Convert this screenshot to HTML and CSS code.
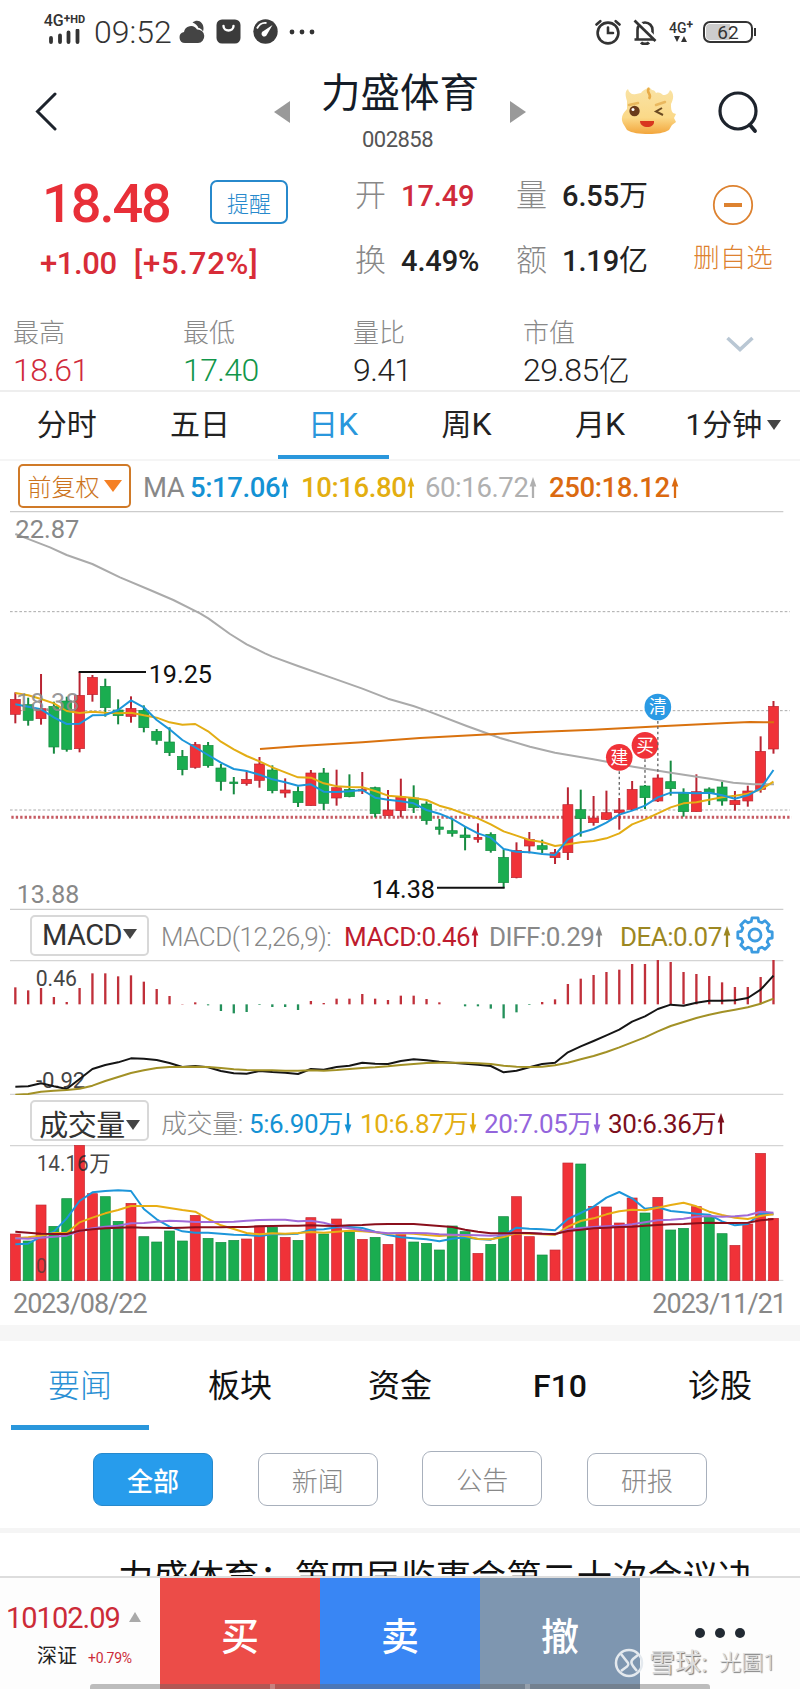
FILE: index.html
```html
<!DOCTYPE html>
<html lang="zh-CN">
<head>
    <meta charset="UTF-8">
    <meta name="viewport" content="width=device-width, initial-scale=1.0">
    <title>力盛体育 002858</title>
    <link rel="stylesheet" href="styles.css">
</head>
<body>
    <div class="phone">
        <!-- 状态栏 -->
        <div class="status-bar">
            <div class="signal">
                <span class="net">4G<sup>+</sup><b>HD</b></span>
                <svg width="34" height="15" viewBox="0 0 34 15"><path d="M3 9v4M12 6.500v6.500M20.500 3.500v9.500M29.500 1.500v11.500" stroke="#333" stroke-width="3.800" stroke-linecap="round"/></svg>
            </div>
            <span class="time">09:52</span>
            <svg class="st-cloud" width="26" height="26" viewBox="0 0 26 26"><path d="M6 24a5.500 5.500 0 0 1-1-10.900A7 7 0 0 1 18 10.500a6 6 0 0 1 1 13.500z" fill="#444"/><path d="M13.500 3.500c6-5 13 1 10.500 9-1.500-3-4-3.500-4.500-3.500-1-2.500-3-4.500-6-5.500z" fill="#444"/></svg>
            <svg class="st-bag" width="25" height="25" viewBox="0 0 25 25"><rect x=".5" y=".5" width="24" height="24" rx="5.500" fill="#3b3b3b"/><path d="M7.500 7c0 6 10 6 10 0" fill="none" stroke="#fff" stroke-width="2.400" stroke-linecap="round"/></svg>
            <svg class="st-gauge" width="25" height="25" viewBox="0 0 25 25"><circle cx="12.500" cy="12.500" r="12.200" fill="#3b3b3b"/><path d="M19.500 6l-5.500 9.500a2.800 2.800 0 1 1-3.500-3.500z" fill="#fff"/><path d="M4 9.500c2-4 6-6 9.500-5.500" fill="none" stroke="#fff" stroke-width="1.800"/></svg>
            <svg class="st-dots" width="26" height="6" viewBox="0 0 26 6"><g fill="#333"><circle cx="3" cy="3" r="2.400"/><circle cx="13" cy="3" r="2.400"/><circle cx="23" cy="3" r="2.400"/></g></svg>
            <div class="status-right">
                <svg width="26" height="26" viewBox="0 0 26 26" fill="none" stroke="#333" stroke-width="2.600" stroke-linecap="round"><circle cx="13" cy="14" r="10.400"/><path d="M13 8.500V14h5M1.500 5.500l3.800-3.300M24.500 5.500l-3.800-3.300"/></svg>
                <svg width="24" height="26" viewBox="0 0 24 26" fill="none" stroke="#333" stroke-width="2.600"><path d="M4.500 20.500V11c0-4 3-7.500 7.500-7.500s7.500 3.500 7.500 7.500v9.500M1.500 20.500h21"/><path d="M8 23.500c2 2 6 2 8 0" stroke-width="3"/><path d="M4 1.500l20 20" stroke="#fff" stroke-width="4"/><path d="M1.500 1.500l21 20.500" stroke-width="2.700"/></svg>
                <div class="net2">
                    <span>4G<sup>+</sup></span>
                    <svg width="13" height="6" viewBox="0 0 13 6"><path d="M0 0h6L3 6zM7 6h6l-3-6z" fill="#333"/></svg>
                </div>
                <div class="battery"><span>62</span></div>
            </div>
        </div>

        <!-- 标题栏 -->
        <header class="header">
            <svg class="back" width="22" height="42" viewBox="0 0 22 42"><path d="M20 3L2.500 20.500 20 38" fill="none" stroke="#1d232c" stroke-width="3" stroke-linecap="round"/></svg>
            <i class="arrow-left"></i>
            <div class="title">
                <h1>力盛体育</h1>
                <p>002858</p>
            </div>
            <i class="arrow-right"></i>
            <svg class="mascot" width="56" height="50" viewBox="0 0 56 50">
                <defs>
                    <linearGradient id="face" x1="0" y1="0" x2="0" y2="1">
                        <stop offset="0" stop-color="#f9e3a6"/>
                        <stop offset=".65" stop-color="#fbd988"/>
                        <stop offset="1" stop-color="#f3a63c"/>
                    </linearGradient>
                </defs>
                <path d="M6 15C4 9 4 5 7 3c1 4 4 6 8 5 2 0 3-1 5-1 1-2 3-3 5-4l3-2 3 3c2 0 3 1 4 3 3-1 5 0 7 2 4 0 6-2 7-5 4 3 4 8 1 14 0 4 0 7 2 9l3 1-2 4 2 4-4 3-3 5c-5 3-12 4-20 4-10 0-17-1-22-4l-3-5c-4-6-2-11 3-16z" fill="url(#face)"/>
                <path d="M28 2c-4 5 4 6 0 11" stroke="#e8ab48" stroke-width="2.500" fill="none"/>
                <path d="M8 19l9-2M35 19l9-3" stroke="#e9b85e" stroke-width="2.500" stroke-linecap="round"/>
                <circle cx="13.500" cy="25" r="5.200" fill="#6a3b1c"/><circle cx="12" cy="23.500" r="1.500" fill="#fff"/>
                <path d="M41 22l-6 3.500 7 3.500" fill="none" stroke="#6a4a22" stroke-width="2"/>
                <path d="M19 35h14c1 8-14 8-14 0z" fill="#d8371f"/>
            </svg>
            <svg class="search" width="42" height="44" viewBox="0 0 42 44" fill="none" stroke="#1d232c"><circle cx="20" cy="21" r="18" stroke-width="3.200"/><path d="M32 35l5 6" stroke-width="3.800" stroke-linecap="round"/></svg>
        </header>

        <!-- 行情报价 -->
        <section class="quote">
            <div class="price-box">
                <div class="price-row">
                    <span class="price">18.48</span>
                    <button class="remind">提醒</button>
                </div>
                <div class="change"><span>+1.00</span><span class="pct">[+5.72%]</span></div>
            </div>
            <div class="quote-grid">
                <label>开</label><b class="up">17.49</b><label>量</label><b>6.55<em>万</em></b>
                <label>换</label><b>4.49%</b><label>额</label><b>1.19<em>亿</em></b>
            </div>
            <div class="fav">
                <svg width="42" height="42" viewBox="0 0 42 42"><circle cx="21" cy="21" r="19.200" fill="none" stroke="#dd8230" stroke-width="1.800"/><path d="M12 21h18" stroke="#dd8230" stroke-width="4"/></svg>
                <span>删自选</span>
            </div>
        </section>

        <section class="stats">
            <div><label>最高</label><p class="up">18.61</p></div>
            <div><label>最低</label><p class="down">17.40</p></div>
            <div><label>量比</label><p>9.41</p></div>
            <div><label>市值</label><p>29.85<em>亿</em></p></div>
            <svg class="more" width="30" height="18" viewBox="0 0 30 18"><path d="M2.500 3L15 14.500 27.500 3" fill="none" stroke="#b9c7d4" stroke-width="3.600"/></svg>
        </section>

        <nav class="periods">
            <a>分时</a>
            <a>五日</a>
            <a class="active">日<b>K</b></a>
            <a>周<b>K</b></a>
            <a>月<b>K</b></a>
            <a class="minute">1分钟<i class="caret"></i></a>
        </nav>

        <!-- K线图 -->
        <div class="ind-row ma-row">
            <button class="fq">前复权<i class="caret"></i></button>
            <span class="c-gray">MA</span>
            <span class="c-blue bold">5:17.06<svg class="arr"><use href="#up"/></svg></span>
            <span class="c-yellow bold">10:16.80<svg class="arr"><use href="#up"/></svg></span>
            <span class="c-light">60:16.72<svg class="arr"><use href="#up"/></svg></span>
            <span class="c-orange bold">250:18.12<svg class="arr"><use href="#up"/></svg></span>
        </div>
        <svg class="chart" id="kline" width="800" height="400" viewBox="0 0 2400 1200"></svg>

        <!-- MACD -->
        <div class="ind-row macd-row">
            <button class="ind-btn">MACD<i class="caret"></i></button>
            <span class="c-gray light">MACD(12,26,9):</span>
            <span class="c-red">MACD:0.46<svg class="arr"><use href="#up"/></svg></span>
            <span class="c-gray">DIFF:0.29<svg class="arr"><use href="#up"/></svg></span>
            <span class="c-olive">DEA:0.07<svg class="arr"><use href="#up"/></svg></span>
            <svg class="gear" width="40" height="40" viewBox="-20 -20 40 40" fill="none" stroke="#3b9be0" stroke-width="2.800" stroke-linejoin="round"><path id="gearPath"/><circle r="6"/></svg>
        </div>
        <svg class="chart" id="macd" width="800" height="135" viewBox="0 165 2400 405"></svg>

        <!-- 成交量 -->
        <div class="ind-row vol-row">
            <button class="ind-btn cn">成交量<i class="caret"></i></button>
            <span class="c-gray light">成交量:</span>
            <span class="c-blue">5:6.90<em>万</em><svg class="arr"><use href="#down"/></svg></span>
            <span class="c-yellow">10:6.87<em>万</em><svg class="arr"><use href="#down"/></svg></span>
            <span class="c-purple">20:7.05<em>万</em><svg class="arr"><use href="#down"/></svg></span>
            <span class="c-dark">30:6.36<em>万</em><svg class="arr"><use href="#up"/></svg></span>
        </div>
        <svg class="chart" id="volume" width="800" height="136" viewBox="0 720 2400 408"></svg>
        <div class="dates"><span>2023/08/22</span><span>2023/11/21</span></div>

        <!-- 资讯 -->
        <nav class="news-tabs">
            <a class="active">要闻</a>
            <a>板块</a>
            <a>资金</a>
            <a><b>F10</b></a>
            <a>诊股</a>
        </nav>
        <div class="chips">
            <button class="on">全部</button>
            <button>新闻</button>
            <button class="tall">公告</button>
            <button>研报</button>
        </div>
        <div class="news"><p>力盛体育：第四届监事会第二十次会议决</p></div>

        <!-- 底部交易栏 -->
        <footer class="trade-bar">
            <div class="index">
                <div class="index-val">10102.09<i></i></div>
                <div class="index-name">深证<small>+0.79%</small></div>
            </div>
            <button class="buy">买</button>
            <button class="sell">卖</button>
            <button class="cancel">撤</button>
            <div class="dots"><i></i><i></i><i></i></div>
            <div class="home-bar"><i></i><i></i></div>
            <div class="watermark">
                <svg width="30" height="30" viewBox="0 0 30 30" fill="none" stroke="#e4e9ee" stroke-width="2.500"><circle cx="15" cy="15" r="13"/><path d="M7 6l7 9c1 2 0 3-3 5l-4 3M24 7l-5 4c-3 3-2 5 4 12"/></svg>
                <span>雪球:</span><span class="user">光圖1</span>
            </div>
        </footer>
    </div>

    <svg width="0" height="0" class="defs">
        <symbol id="up" viewBox="0 0 8 22"><path d="M4 8v14" stroke="currentColor" stroke-width="2.400"/><path d="M0.500 10L4 0l3.500 10z" fill="currentColor"/></symbol>
        <symbol id="down" viewBox="0 0 8 22"><path d="M4 0v14" stroke="currentColor" stroke-width="2.400"/><path d="M0.500 12L4 22l3.500-10z" fill="currentColor"/></symbol>
    </svg>
    <script src="script.js"></script>
</body>
</html>
```
FILE: styles.css
```css
* {
    box-sizing: border-box;
    margin: 0;
    padding: 0;
}
body {
    width: 800px;
    background: #fff;
    font-family: Roboto, "Noto Sans CJK SC", sans-serif;
    color: #222;
}
button {
    font-family: inherit;
    background: #fff;
}
em, i {
    font-style: normal;
}
.phone {
    width: 800px;
    height: 1689px;
    overflow: hidden;
    display: flex;
    flex-direction: column;
}
.phone > * {
    flex-shrink: 0;
}
.defs {
    display: block;
}
.up {
    color: #d02a3a;
}
.down {
    color: #12964a;
}
.caret {
    display: inline-block;
    border: 7px solid transparent;
    border-top: 10px solid #444;
    border-bottom: 0;
}

/* 状态栏 */
.status-bar {
    height: 60px;
    padding: 3px 47px 0 43px;
    display: flex;
    align-items: center;
    color: #333;
}
.signal {
    width: 43px;
    display: flex;
    flex-direction: column;
    align-items: center;
    gap: 2px;
    padding-bottom: 4px;
}
.net {
    font-size: 16px;
    font-weight: 500;
    line-height: 12px;
    white-space: nowrap;
    display: flex;
}
.net sup, .net2 sup {
    font-size: 12px;
    line-height: 8px;
    font-weight: 700;
}
.net b {
    font-size: 11px;
    line-height: 9px;
}
.time {
    width: 92px;
    margin-left: 8px;
    font-size: 32px;
    font-weight: 300;
    letter-spacing: 0;
    line-height: 36px;
    margin-right: -7px;
}
.st-bag {
    margin-left: 11px;
}
.st-gauge {
    margin-left: 12px;
}
.st-dots {
    margin-left: 11px;
}
.status-right {
    margin-left: auto;
    display: flex;
    align-items: center;
}
.status-right > * {
    margin-left: 12px;
}
.net2 {
    display: flex;
    flex-direction: column;
    align-items: center;
    font-size: 14px;
    font-weight: 500;
    line-height: 15px;
}
.net2 span {
    display: flex;
}
.battery {
    position: relative;
    width: 50px;
    height: 22px;
    margin-left: 10px;
    border: 2px solid #333;
    border-radius: 7px;
    background: linear-gradient(90deg, #ccc 55%, #fff 55%);
    box-shadow: inset 0 0 0 1px #fff;
    text-align: center;
    font-size: 19px;
    line-height: 19px;
}
.battery::after {
    content: "";
    position: absolute;
    right: -5px;
    top: 5px;
    width: 2px;
    height: 8px;
    background: #333;
}

/* 标题栏 */
.header {
    height: 105px;
    display: flex;
    align-items: flex-start;
}
.back {
    margin: 31px 0 0 35px;
}
.arrow-left, .arrow-right {
    border: 11px solid transparent;
    margin-top: 41px;
}
.arrow-left {
    margin-left: 217px;
    border-left: 0;
    border-right: 16px solid #999;
}
.arrow-right {
    border-right: 0;
    border-left: 16px solid #999;
}
.title {
    width: 220px;
    padding-top: 9px;
    text-align: center;
}
.title h1 {
    font-size: 39.5px;
    font-weight: 400;
    line-height: 50px;
    color: #141c28;
}
.title p {
    margin: 9px 5px 0 0;
    font-size: 22px;
    line-height: 24px;
    letter-spacing: -0.5px;
    color: #555;
}
.mascot {
    margin: 26px 0 0 95px;
}
.search {
    margin: 30px 0 0 41px;
}

/* 报价 */
.quote {
    height: 135px;
    display: flex;
}
.price-box {
    width: 355px;
    padding-left: 40px;
}
.price-row {
    display: flex;
    height: 74px;
}
.price {
    width: 170px;
    padding-left: 2px;
    font-size: 54px;
    font-weight: 500;
    line-height: 78px;
    letter-spacing: -2px;
    color: #e82f38;
}
.remind {
    width: 78px;
    height: 44px;
    margin-top: 15px;
    border: 2px solid #2789cc;
    border-radius: 7px;
    color: #2789cc;
    font-size: 22px;
    font-weight: 300;
}
.change {
    display: flex;
    gap: 17px;
    font-size: 31px;
    line-height: 50px;
    letter-spacing: -0.4px;
    color: #d82c38;
    font-weight: 500;
}
.change .pct {
    letter-spacing: 0.8px;
}
.quote-grid {
    width: 325px;
    height: 130px;
    padding-top: 0;
    display: grid;
    grid-template-columns: 46px 115px 46px 1fr;
    grid-template-rows: 62px 68px;
    align-items: center;
    font-size: 29px;
}
.quote-grid label {
    font-size: 31px;
    line-height: 40px;
    font-weight: 300;
    color: #888;
}
.quote-grid b {
    font-weight: 500;
    line-height: 40px;
    white-space: nowrap;
    letter-spacing: -0.1px;
}
.quote-grid em {
    font-weight: 400;
}
.fav {
    width: 106px;
    padding-top: 19px;
    display: flex;
    flex-direction: column;
    align-items: center;
    color: #dd8230;
    font-size: 26.5px;
    font-weight: 300;
    line-height: 38px;
}
.fav span {
    margin-top: 13px;
}
.stats {
    height: 92px;
    padding: 15px 0 0 13px;
    display: grid;
    grid-template-columns: repeat(4, 170px) 1fr;
    border-bottom: 2px solid #eee;
}
.stats label {
    display: block;
    font-size: 26px;
    font-weight: 300;
    line-height: 37px;
    color: #888;
}
.stats p {
    font-size: 32px;
    font-weight: 300;
    line-height: 37px;
    letter-spacing: -0.6px;
    white-space: nowrap;
}
.stats em {
    font-size: 31px;
}
.more {
    margin: 20px 0 0 32px;
}

/* 周期 */
.periods {
    height: 69px;
    display: grid;
    grid-template-columns: repeat(6, 1fr);
    border-bottom: 2px solid #f5f5f5;
    font-size: 30px;
    line-height: 65px;
    text-align: center;
}
.periods b {
    font-weight: 400;
    font-size: 32px;
}
.periods .active {
    width: 111px;
    height: 67px;
    margin-left: 11px;
    border-bottom: 4px solid #2a97dc;
    color: #2a97dc;
}
.minute .caret {
    margin-left: 5px;
    vertical-align: 5px;
}

/* 指标行 */
.ind-row {
    display: grid;
    align-items: center;
    height: 50px;
    font-size: 26px;
    white-space: nowrap;
}
.ind-row span {
    padding-top: 3px;
}
.ind-row .light {
    font-weight: 300;
}
.ind-row .bold {
    font-weight: 500;
}
.ind-row em {
    font-size: 25px;
    font-weight: 400;
}
.arr {
    width: 8px;
    height: 21px;
    vertical-align: -1px;
    margin-left: 1px;
}
.ma-row {
    height: 49px;
    padding-left: 18px;
    grid-template-columns: 125px 47px 111px 124px 124px 1fr;
    font-size: 27.5px;
    letter-spacing: -0.4px;
}
.fq {
    width: 113px;
    height: 44px;
    border: 2px solid #d07a28;
    border-radius: 5px;
    color: #cc7420;
    font-size: 24px;
    font-weight: 300;
}
.fq .caret {
    border-width: 12px 9px 0;
    border-top-color: #f58024;
    margin-left: 4px;
    vertical-align: 4px;
}
.ind-btn {
    width: 119px;
    height: 41px;
    border: 2px solid #d8d8d8;
    border-radius: 5px;
    font-size: 29px;
    color: #333;
    letter-spacing: -0.5px;
}
.ind-btn.cn {
    font-size: 29px;
}
.ind-btn .caret {
    margin-left: 1px;
    vertical-align: 6px;
}
.macd-row {
    padding-left: 30px;
    grid-template-columns: 131px 183px 145px 131px 114px 1fr;
    letter-spacing: -0.5px;
}
.gear {
    margin-left: 1px;
}
.vol-row {
    padding-left: 30px;
    grid-template-columns: 131px 88px 111px 124px 124px 1fr;
    letter-spacing: -0.4px;
}
.c-gray { color: #888; }
.c-light { color: #b0b0b0; }
.c-blue { color: #1492d4; }
.c-yellow { color: #e3ae10; }
.c-orange { color: #db6a10; }
.c-red { color: #be1c2e; }
.c-olive { color: #9c8722; }
.c-purple { color: #9365dc; }
.c-dark { color: #7c0f1c; }

.chart {
    display: block;
    font-family: Roboto, "Noto Sans CJK SC", sans-serif;
}
.dates {
    height: 44px;
    padding: 0 14px 0 13px;
    display: flex;
    justify-content: space-between;
    font-size: 27px;
    line-height: 46px;
    letter-spacing: -1px;
    color: #888;
}

/* 资讯 */
.news-tabs {
    height: 106px;
    border-top: 16px solid #f6f6f6;
    display: grid;
    grid-template-columns: repeat(5, 160px);
    text-align: center;
    font-size: 32px;
    line-height: 91px;
    color: #111;
}
.news-tabs b {
    font-weight: 500;
}
.news-tabs .active {
    width: 138px;
    height: 89px;
    margin-left: 11px;
    border-bottom: 5px solid #2a97dc;
    color: #2a90d4;
    font-weight: 300;
}
.chips {
    height: 102px;
    padding: 22px 93px 0;
    display: flex;
    justify-content: space-between;
    border-bottom: 5px solid #f5f5f5;
}
.chips button {
    width: 120px;
    height: 53px;
    border: 1px solid #a8b0bc;
    border-radius: 9px;
    font-size: 26px;
    font-weight: 300;
    color: #888;
}
.chips .on {
    background: #279cec;
    border-color: #2789cc;
    color: #fff;
    font-weight: 500;
}
.chips .tall {
    height: 55px;
    margin-top: -2px;
}
.news {
    height: 43px;
    overflow: hidden;
    padding: 20px 0 0 118px;
}
.news p {
    font-size: 35.3px;
    line-height: 51px;
    white-space: nowrap;
    color: #111;
}

/* 交易栏 */
.trade-bar {
    position: relative;
    height: 113px;
    display: grid;
    grid-template-columns: repeat(5, 160px);
    border-top: 2px solid #ddd;
    background: #fdfdfd;
}
.trade-bar button {
    border: 0;
    color: #fff;
    font-size: 38px;
    font-weight: 500;
}
.trade-bar .buy { background: #ec4c48; }
.trade-bar .sell { background: #3986f4; }
.trade-bar .cancel { background: #7e96b0; }
.index {
    padding: 20px 0 0 6px;
}
.index-val {
    font-size: 29px;
    line-height: 40px;
    letter-spacing: -1px;
    color: #cc2b38;
    white-space: nowrap;
}
.index-val i {
    display: inline-block;
    margin-left: 9px;
    border: 6px solid transparent;
    border-top: 0;
    border-bottom: 10px solid #aaa;
    vertical-align: 6px;
}
.index-name {
    padding-left: 31px;
    font-size: 20px;
    line-height: 36px;
}
.index-name small {
    margin-left: 11px;
    font-size: 14px;
    letter-spacing: -0.3px;
    color: #cc2b38;
}
.dots {
    display: flex;
    justify-content: center;
    gap: 10px;
    padding-top: 50px;
}
.dots i {
    width: 10px;
    height: 10px;
    border-radius: 50%;
    background: #222a33;
}
.home-bar {
    position: absolute;
    left: 90px;
    right: 90px;
    bottom: 0;
    height: 5px;
    padding: 0 180px;
    border-radius: 3px 3px 0 0;
    background: rgba(100, 100, 100, 0.42);
    display: flex;
    justify-content: space-between;
}
.home-bar i {
    width: 5px;
    background: rgba(255, 255, 255, 0.25);
}
.watermark {
    position: absolute;
    left: 614px;
    top: 69px;
    display: flex;
    align-items: center;
    font-size: 26px;
    line-height: 32px;
    color: #ddd;
    text-shadow: 1px 1px 1px #777;
    white-space: nowrap;
}
.watermark svg {
    margin-right: 5px;
}
.watermark .user {
    font-size: 22px;
    margin-left: 12px;
    font-weight: 300;
}
```
FILE: script.js
```js
const RED = '#f03238', GREEN = '#1aad50';
const STEP = 38.55, START = 46;
const xAt = i => START + i * STEP;

// 最高, 实体上沿, 实体下沿, 最低, 涨(1)/跌(0)
const candles = [
    [547,568,613,640,1],[563,584,631,647,0],[492,596,626,644,1],[575,589,711,731,0],[560,573,718,725,0],
    [486,556,716,727,1],[495,502,554,575,1],[506,529,593,620,0],[568,600,617,643,0],[559,595,619,638,1],
    [586,601,653,667,0],[657,664,691,704,0],[652,696,728,738,0],[720,739,779,796,0],[696,704,772,776,1],
    [696,706,767,773,0],[762,774,814,842,0],[801,816,821,853,0],[785,808,821,827,1],[741,762,811,833,1],
    [766,780,842,850,0],[805,840,849,863,1],[829,844,878,891,0],[780,789,887,887,1],[774,789,880,900,0],
    [779,833,864,887,1],[793,838,860,862,0],[786,838,843,852,1],[830,833,911,922,0],[840,900,917,917,1],
    [806,861,902,922,1],[826,864,893,909,0],[874,882,932,944,0],[927,951,958,974,0],[925,962,970,980,0],
    [950,975,983,1021,0],[940,982,988,998,1],[967,973,1022,1028,0],[1018,1042,1118,1133,0],[997,1021,1103,1105,1],
    [966,988,1008,1030,1],[989,1007,1018,1030,0],[1017,1028,1043,1062,1],[832,884,1028,1050,1],[839,899,926,980,0],
    [858,924,938,947,1],[842,908,928,930,1],[864,900,908,959,1],[813,838,898,900,1],[825,828,863,897,0],
    [793,804,873,876,1],[752,815,836,857,0],[835,850,905,920,0],[793,845,905,905,1],[832,837,850,885,0],
    [815,831,873,887,0],[843,871,884,902,1],[827,843,873,890,1],[679,724,838,848,1],[573,589,717,731,1]
];
const ma5 = [583,590,598,622,642,641,616,615,600,571,592,630,658,690,712,735,758,777,783,794,808,817,827,823,845,846,844,840,863,869,874,880,900,911,927,950,970,983,1017,1025,1027,1032,1035,988,968,957,938,914,902,887,862,848,848,850,848,856,866,856,835,780];
const ma10 = [549,556,567,580,603,609,605,608,610,608,616,623,637,644,642,664,695,718,738,754,772,787,802,803,820,829,831,832,843,857,860,864,870,887,898,912,925,943,964,977,990,996,1008,1003,997,993,985,970,943,928,910,892,880,877,869,862,857,851,839,815];
const ma60 = '46,72 80,85 150,112 200,135 277,162 360,202 450,240 520,270 600,310 625,325 690,372 740,403 795,430 817,440 894,468 1000,505 1087,536 1164,566 1240,588 1280,602 1400,648 1500,684 1590,710 1665,728 1780,748 1900,770 2012,788 2130,806 2200,818 2260,823 2322,823';
const ma250 = '780,717 900,708 1087,697 1260,684 1500,671 1590,667 1780,659 1980,649 2180,639 2250,636 2322,637';

const macdBars = [247,256,249,276,291,249,205,205,214,211,230,252,273,297,292,301,318,325,321,300,306,306,315,288,294,281,281,267,281,285,272,272,282,292,298,304,304,311,340,322,300,291,283,237,221,210,201,194,177,177,164,171,201,207,213,232,246,246,216,165];
const diff = [545,544,535,544,552,522,492,480,472,460,461,465,474,486,483,487,498,505,506,498,501,503,507,492,494,486,482,473,476,477,468,463,466,470,473,476,479,483,502,497,487,477,473,442,424,408,391,374,350,334,312,299,302,293,287,287,286,279,254,212];
const dea = [569,567,560,557,555,551,542,528,516,504,496,489,486,486,485,486,489,493,495,496,496,497,497,496,497,495,492,489,487,484,480,477,474,473,473,473,475,477,482,485,486,485,481,473,463,453,441,427,412,397,379,363,351,339,329,321,314,307,296,281];

const vol = [987,1008,900,964,881,721,866,875,949,895,995,1011,978,1008,931,1000,1012,1006,1002,963,967,997,1006,938,987,942,981,1003,997,1018,989,1011,1015,1035,963,980,1045,1018,935,875,995,1050,1035,774,777,904,906,954,879,924,877,975,970,905,937,986,1021,957,745,940];
const volUp = [0,2,5,6,9,14,18,19,21,23,25,27,29,30,36,39,40,42,43,45,46,47,48,50,53,56,57,58,59];
const v5 = [1018,1016,995,980,940,888,862,858,856,858,912,943,965,979,983,983,986,989,990,993,988,988,986,974,973,967,966,969,980,990,997,1000,1003,1009,1001,997,1002,1004,990,968,971,973,976,942,924,905,878,861,880,911,907,918,922,926,929,949,961,957,926,928];
const v10 = [1000,997,992,984,984,952,938,925,915,903,903,903,909,915,920,942,961,972,984,988,985,986,984,981,983,980,977,979,982,986,985,986,990,993,990,993,1002,1003,996,985,986,988,990,965,948,940,928,919,914,916,908,900,893,904,920,930,938,942,933,928];
const v20 = [1000,1001,998,995,992,978,970,965,962,955,954,950,947,949,951,951,951,950,947,945,944,944,949,947,953,964,970,976,981,985,984,984,985,988,989,990,991,992,990,983,984,986,988,974,969,966,964,962,958,952,946,944,941,935,933,935,934,931,920,923];
const v30 = [980,983,986,987,987,977,973,970,968,967,968,968,969,968,967,967,967,966,966,964,963,962,962,961,962,963,961,960,958,957,957,957,960,963,966,974,980,985,985,984,984,986,987,978,974,970,968,966,965,962,960,958,957,955,953,954,954,953,946,942];

function poly(points, color, w = 6) {
    if (Array.isArray(points)) points = points.map((y, i) => xAt(i) + ',' + y).join(' ');
    return `<polyline points="${points}" fill="none" stroke="${color}" stroke-width="${w}" stroke-linejoin="round"/>`;
}
function line(x1, y1, x2, y2, color, w, dash = '') {
    return `<line x1="${x1}" y1="${y1}" x2="${x2}" y2="${y2}" stroke="${color}" stroke-width="${w}" stroke-dasharray="${dash}"/>`;
}
function label(x, y, text, width, color, size = 77) {
    return `<text x="${x}" y="${y}" font-size="${size}" textLength="${width}" lengthAdjust="spacingAndGlyphs" fill="${color}">${text}</text>`;
}

// K线
function drawKline() {
    let s = line(30, 5, 2350, 5, '#ccc', 4) + line(30, 1198, 2350, 1198, '#ccc', 4);
    [305, 602, 900].forEach(y => s += line(30, y, 2370, y, '#aaa', 3, '8 6'));
    s += line(34, 922, 2375, 922, '#c65b63', 9, '7 6.300');
    candles.forEach(([h, t, b, l, up], i) => {
        const x = xAt(i), w = b - t < 8 ? 24 : 30;
        s += line(x, h, x, l, up ? '#b92432' : '#168a40', 6);
        s += `<rect x="${x - w / 2}" y="${t}" width="${w}" height="${b - t}" fill="${up ? RED : GREEN}" stroke="${up ? '#b92432' : '#168a40'}" stroke-width="2"/>`;
    });
    s += poly(ma60, '#aaa') + poly(ma250, '#d9720f') + poly(ma10, '#e3ad14') + poly(ma5, '#1d96da');
    s += label(46, 83, '22.87', 192, '#888') + label(48, 602, '18.38', 190, 'rgba(140,140,140,.9)') + label(50, 1180, '13.88', 188, '#888');
    s += line(236, 486, 438, 486, '#111', 6) + line(1311, 1133, 1514, 1133, '#111', 6);
    s += label(446, 518, '19.25', 190, '#111') + label(1115, 1164, '14.38', 190, '#111');
    [[47, 742, RED, '建', 865], [49, 706, RED, '买', 828], [50, 591, '#2a9ae4', '清', 793]].forEach(([i, y, c, t, end]) => {
        const x = xAt(i);
        s += line(x, y + 42, x, end, '#666', 4, '8 8');
        s += `<circle cx="${x}" cy="${y}" r="40" fill="${c}"/>`;
        s += `<text x="${x}" y="${y + 19}" font-size="53" text-anchor="middle" fill="#fff">${t}</text>`;
    });
    document.getElementById('kline').innerHTML = s;
}

function drawMacd() {
    let s = line(30, 167, 2350, 167, '#d4d4d4', 4) + line(30, 568, 2350, 568, '#d4d4d4', 4);
    macdBars.forEach((y, i) => s += line(xAt(i), 298, xAt(i), y, y < 298 ? '#c0303a' : '#23905a', 7));
    s += label(107, 242, '0.46', 124, '#444', 64) + label(108, 548, '-0.92', 148, '#444', 64);
    s += poly(diff, '#151515') + poly(dea, '#a29126');
    document.getElementById('macd').innerHTML = s;
}

function drawVolume() {
    let s = line(30, 722, 2350, 722, '#d4d4d4', 4) + line(30, 1126, 2350, 1126, '#d4d4d4', 3);
    vol.forEach((y, i) => {
        const up = volUp.includes(i);
        s += `<rect x="${xAt(i) - 15}" y="${y}" width="30" height="${1127 - y}" fill="${up ? RED : GREEN}" stroke="${up ? '#c02a35' : '#168a40'}" stroke-width="2"/>`;
    });
    s += label(110, 798, '14.16', 156, 'rgba(40,40,40,.85)', 66) + label(268, 799, '万', 64, '#444', 64) + label(108, 1103, '0', 32, 'rgba(60,60,60,.7)', 62);
    s += poly(v5, '#1d96da') + poly(v10, '#e8ae14') + poly(v20, '#a06ad8') + poly(v30, '#8a0f1c');
    document.getElementById('volume').innerHTML = s;
}

// 设置齿轮, 8 齿
function gear() {
    let d = '';
    for (let k = 0; k < 8; k++) {
        [[-0.27, 14], [-0.17, 17.5], [0.17, 17.5], [0.27, 14]].forEach(([o, r], n) => {
            const a = k * Math.PI / 4 + o;
            d += (k || n ? 'L' : 'M') + (r * Math.sin(a)).toFixed(1) + ' ' + (-r * Math.cos(a)).toFixed(1);
        });
    }
    document.getElementById('gearPath').setAttribute('d', d + 'Z');
}

drawKline();
drawMacd();
drawVolume();
gear();
```
